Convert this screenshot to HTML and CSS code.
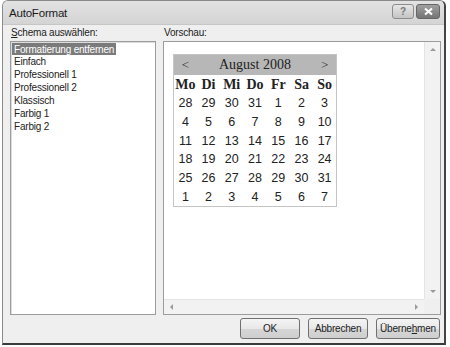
FILE: index.html
```html
<!DOCTYPE html>
<html lang="de">
<head>
    <meta charset="UTF-8">
    <title>AutoFormat</title>
    <link rel="stylesheet" href="styles.css">
</head>
<body>
    <div class="window">
        <div class="titlebar">
            <span class="title">AutoFormat</span>
            <div class="caption-buttons">
                <span class="cap-btn help">?</span>
                <span class="cap-btn close">
                    <svg width="11" height="9" viewBox="0 0 11 9"><path d="M2 1.5 L9 7.5 M9 1.5 L2 7.5" stroke="#fff" stroke-width="2.2"/></svg>
                </span>
            </div>
        </div>

        <div class="content">
            <div class="panes">
                <div class="pane left-pane">
                    <div class="label"><u>S</u>chema auswählen:</div>
                    <ul class="listbox">
                        <li class="selected">Formatierung entfernen</li>
                        <li>Einfach</li>
                        <li>Professionell 1</li>
                        <li>Professionell 2</li>
                        <li>Klassisch</li>
                        <li>Farbig 1</li>
                        <li>Farbig 2</li>
                    </ul>
                </div>
                <div class="pane right-pane">
                    <div class="label">Vorschau:</div>
                    <div class="preview">
                        <div class="preview-main">
                            <div class="preview-area">
                                <table class="calendar">
                                    <tr class="cal-head">
                                        <td>&lt;</td>
                                        <td colspan="5" class="month">August 2008</td>
                                        <td>&gt;</td>
                                    </tr>
                                    <tr class="cal-days">
                                        <th>Mo</th><th>Di</th><th>Mi</th><th>Do</th><th>Fr</th><th>Sa</th><th>So</th>
                                    </tr>
                                    <tr><td>28</td><td>29</td><td>30</td><td>31</td><td>1</td><td>2</td><td>3</td></tr>
                                    <tr><td>4</td><td>5</td><td>6</td><td>7</td><td>8</td><td>9</td><td>10</td></tr>
                                    <tr><td>11</td><td>12</td><td>13</td><td>14</td><td>15</td><td>16</td><td>17</td></tr>
                                    <tr><td>18</td><td>19</td><td>20</td><td>21</td><td>22</td><td>23</td><td>24</td></tr>
                                    <tr><td>25</td><td>26</td><td>27</td><td>28</td><td>29</td><td>30</td><td>31</td></tr>
                                    <tr><td>1</td><td>2</td><td>3</td><td>4</td><td>5</td><td>6</td><td>7</td></tr>
                                </table>
                            </div>
                            <div class="vscroll">
                                <span class="arrow up"></span>
                                <span class="arrow down"></span>
                            </div>
                        </div>
                        <div class="hscroll-row">
                            <div class="hscroll">
                                <span class="arrow left"></span>
                                <span class="arrow right"></span>
                            </div>
                            <div class="corner"></div>
                        </div>
                    </div>
                </div>
            </div>

            <div class="buttons">
                <button class="btn">OK</button>
                <button class="btn">Abbrechen</button>
                <button class="btn">Überne<u>h</u>men</button>
            </div>
        </div>
    </div>
</body>
</html>
```

FILE: styles.css
```css
body {
    margin: 0;
    background: #fff;
    font-family: "Liberation Sans", Arial, sans-serif;
    font-size: 10px;
    letter-spacing: -0.2px;
    color: #222;
}
.window {
    margin-left: 2px;
    width: 441px;
    height: 342px;
    background: #efefef;
    border: 1px solid #8a8a8a;
    border-right: 2px solid #444;
    border-bottom: 2px solid #3a3a3a;
    border-radius: 6px 6px 0 0;
    display: flex;
    flex-direction: column;
}
.titlebar {
    height: 23px;
    display: flex;
    align-items: center;
    justify-content: space-between;
    padding: 0 3px 0 6px;
    background: linear-gradient(#e2e2e2, #d4d4d4);
    border-radius: 5px 5px 0 0;
    border-bottom: 1px solid #c6c6c6;
}
.title {
    font-size: 11.5px;
    color: #1a1a1a;
}
.caption-buttons {
    display: flex;
    gap: 2px;
    align-self: flex-start;
    margin-top: 3px;
    margin-right: 1px;
}
.cap-btn {
    height: 13px;
    border: 1px solid #8c8c8c;
    border-radius: 3px;
    display: flex;
    align-items: center;
    justify-content: center;
}
.help {
    width: 20px;
    background: linear-gradient(#e6e6e6, #c4c4c4);
    color: #777;
    font-size: 10px;
    font-weight: bold;
}
.close {
    width: 22px;
    background: linear-gradient(#a0a0a0, #747474);
    border-color: #666;
}
.content {
    flex: 1;
    display: flex;
    flex-direction: column;
    padding: 1px 3px 4px 7px;
}
.panes {
    flex: 1;
    display: flex;
    gap: 7px;
}
.pane {
    display: flex;
    flex-direction: column;
}
.left-pane {
    width: 146px;
}
.right-pane {
    flex: 1;
}
.label {
    height: 13px;
    line-height: 13px;
    margin: 0 0 2px 1px;
}
.listbox {
    flex: 1;
    margin: 0;
    padding: 0 1px;
    list-style: none;
    background: #fff;
    border: 1px solid #9c9c9c;
    box-shadow: inset 1px 1px 0 #dcdcdc;
}
.listbox li {
    height: 13px;
    line-height: 13px;
    padding: 0 2px;
    width: max-content;
}
.listbox li.selected {
    margin-top: 1px;
    height: 12px;
    background: #7b7b7b;
    color: #fff;
}
.preview {
    flex: 1;
    display: flex;
    flex-direction: column;
    background: #fff;
    border: 1px solid #9c9c9c;
}
.preview-main {
    flex: 1;
    display: flex;
}
.preview-area {
    flex: 1;
    padding: 12px 0 0 9px;
}
.calendar {
    border-collapse: collapse;
    border: 1px solid #c4c4c4;
    width: 164px;
    table-layout: fixed;
    letter-spacing: 0;
}
.calendar td,
.calendar th {
    padding: 0;
    height: 19px;
    text-align: center;
    color: #222;
}
.calendar td {
    font-family: "Liberation Sans", Arial, sans-serif;
    font-size: 12.5px;
    height: 18.7px;
}
.calendar th {
    font-family: "Liberation Serif", serif;
    font-weight: bold;
    font-size: 14px;
}
.cal-head td {
    background: #b7b7b7;
    height: 20px;
    font-family: "Liberation Serif", serif;
    font-size: 13px;
    color: #333;
}
.cal-head td.month {
    font-size: 14px;
    color: #222;
}
.vscroll {
    width: 15px;
    background: #f2f2f2;
    border-left: 1px solid #e4e4e4;
    display: flex;
    flex-direction: column;
    justify-content: space-between;
    align-items: center;
    padding: 6px 0;
}
.hscroll-row {
    height: 15px;
    display: flex;
}
.hscroll {
    flex: 1;
    background: #f2f2f2;
    border-top: 1px solid #e4e4e4;
    display: flex;
    justify-content: space-between;
    align-items: center;
    padding: 0 6px;
}
.corner {
    width: 16px;
    background: #efefef;
}
.arrow {
    width: 0;
    height: 0;
    border: 3px solid transparent;
}
.arrow.up {
    border-bottom-color: #9a9a9a;
    border-top-width: 0;
}
.arrow.down {
    border-top-color: #9a9a9a;
    border-bottom-width: 0;
}
.arrow.left {
    border-right-color: #9a9a9a;
    border-left-width: 0;
}
.arrow.right {
    border-left-color: #9a9a9a;
    border-right-width: 0;
}
.buttons {
    display: flex;
    justify-content: flex-end;
    gap: 8px;
    padding-top: 3px;
    margin-right: 1px;
}
.btn {
    height: 21px;
    width: 60px;
    padding: 0;
    font-family: "Liberation Sans", Arial, sans-serif;
    font-size: 10px;
    letter-spacing: -0.2px;
    color: #222;
    background: linear-gradient(#f4f4f4 0%, #e8e8e8 50%, #d6d6d6 51%, #cfcfcf 100%);
    border: 1px solid #707070;
    border-radius: 3px;
}
.btn:last-child {
    width: 64px;
}
```
